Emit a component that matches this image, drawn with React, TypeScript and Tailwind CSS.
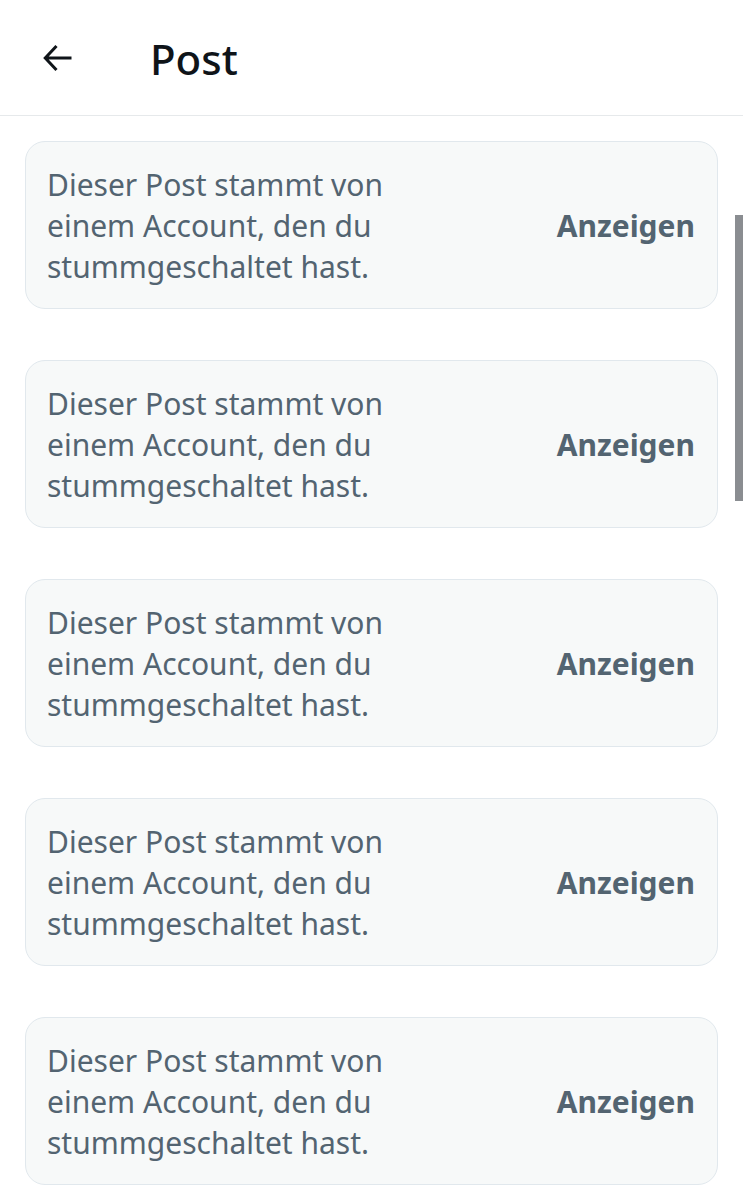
import React from 'react';

const MUTED_TEXT = 'Dieser Post stammt von einem Account, den du stummgeschaltet hast.';

function MutedCard() {
  return (
    <div className="flex h-[168px] items-center justify-between rounded-[20px] border border-[#e1e8ed] bg-[#f7f9f9] pl-[21px] pr-[22px]">
      <p className="w-[380px] text-[30px] leading-[41px] text-[#536471]">{MUTED_TEXT}</p>
      <button className="text-[30px] font-bold leading-[41px] text-[#536471]">Anzeigen</button>
    </div>
  );
}

export default function App() {
  return (
    <div
      className="relative h-[1200px] w-[743px] overflow-hidden bg-white"
      style={{ fontFamily: '"Noto Sans", Roboto, sans-serif' }}
    >
      <header className="flex h-[116px] items-center border-b border-[#e6e9eb]">
        <div className="ml-[40px] flex h-[36px] w-[36px] items-center justify-center">
          <svg viewBox="0 0 24 24" width="38" height="38" fill="none" stroke="#0f1419" strokeWidth="2">
            <path d="M21 12H4M11 4l-7.5 8L11 20" />
          </svg>
        </div>
        <h1 className="ml-[74px] pt-[2px] text-[42px] font-medium leading-none text-[#0f1419]">Post</h1>
      </header>
      <main className="flex flex-col gap-[51px] px-[25px] pt-[25px]">
        {[0, 1, 2, 3, 4].map((i) => (
          <MutedCard key={i} />
        ))}
      </main>
      <div className="absolute right-0 top-[215px] h-[286px] w-[8px] bg-[#8a8d91]" />
    </div>
  );
}
